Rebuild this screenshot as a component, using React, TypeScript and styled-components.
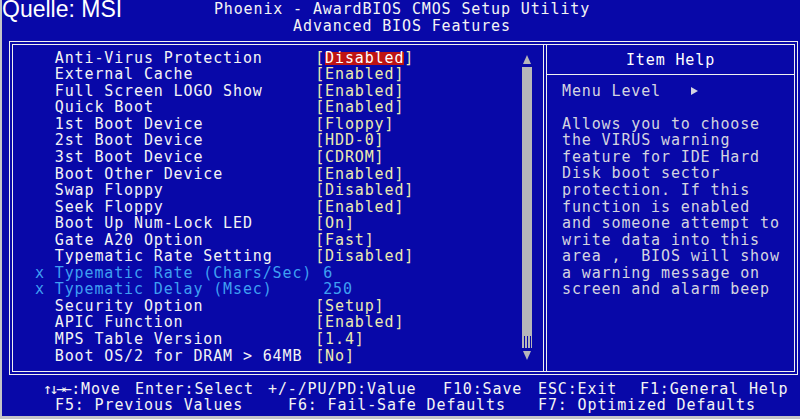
import React from "react";
import styled, { createGlobalStyle } from "styled-components";

const GlobalStyle = createGlobalStyle`
  html, body { margin: 0; padding: 0; background: #0808a8; }
  * { box-sizing: border-box; }
`;

const MONO = `"DejaVu Sans Mono", "Liberation Mono", monospace`;
const BLUE = "#0808a8";
const LINE = 16.55;

const Screen = styled.div`
  width: 800px;
  height: 419px;
  background: ${BLUE};
  border-left: 2px solid #c4c4c8;
  border-bottom: 3px solid #c4c4c8;
  display: flex;
  flex-direction: column;
  font-family: ${MONO};
  font-size: 15px;
  letter-spacing: 0.87px;
  line-height: ${LINE}px;
  color: #f4f4f4;
  overflow: hidden;
`;

const Header = styled.header`
  position: relative;
  height: 41px;
  padding-top: 1px;
  display: flex;
  flex-direction: column;
  align-items: center;
  white-space: pre;
`;

const Watermark = styled.div`
  position: absolute;
  left: 0;
  top: 0;
  font-family: "Liberation Sans", Arial, sans-serif;
  font-size: 23px;
  line-height: 19px;
  letter-spacing: 0;
  color: #ffffff;
`;

const TitleLine = styled.div<{ $shift?: number }>`
  height: ${LINE}px;
  margin-left: ${(p) => p.$shift ?? 0}px;
`;

const Frame = styled.div`
  height: 334px;
  margin: 0 0 0 7px;
  width: 789px;
  border: 4px double #f0f0f0;
  display: flex;
`;

const LeftPanel = styled.section`
  flex: 1;
  display: flex;
`;

const RowList = styled.div`
  flex: 1;
  padding: 4.7px 0 0 22px;
  display: flex;
  flex-direction: column;
`;

const Row = styled.div<{ $dim?: boolean }>`
  display: grid;
  grid-template-columns: 19.8px 260.4px 1fr;
  height: ${LINE}px;
  white-space: pre;
  color: ${(p) => (p.$dim ? "#3f9ff2" : "#f4f4f4")};
`;

const Value = styled.span<{ $dim?: boolean }>`
  color: ${(p) => (p.$dim ? "#3f9ff2" : "#ecebb0")};
  padding-left: ${(p) => (p.$dim ? 8 : 0)}px;
`;

const Selected = styled.span`
  display: inline-block;
  background: #be1414;
  color: #ffffff;
  line-height: 13px;
`;

const ScrollBar = styled.div`
  width: 10px;
  margin: 10px 11px 11px 0;
  display: flex;
  flex-direction: column;
  align-items: center;
`;

const Arrow = styled.svg`
  width: 10px;
  height: 9px;
  flex: none;
`;

const Track = styled.div`
  flex: 1;
  width: 10px;
  margin-top: 3px;
  background: #b6b6ba;
`;

const Dotted = styled.div`
  height: 12px;
  width: 10px;
  margin-bottom: 3px;
  background-image: repeating-linear-gradient(
      90deg,
      #b6b6ba 0 2px,
      ${BLUE} 2px 3px
    ),
    repeating-linear-gradient(0deg, ${BLUE} 0 1px, transparent 1px 2px);
`;

const RightPanel = styled.aside`
  width: 251px;
  border-left: 4px double #f0f0f0;
  display: flex;
  flex-direction: column;
`;

const HelpHeader = styled.div`
  height: 30px;
  border-bottom: 1px solid #f0f0f0;
  display: flex;
  align-items: center;
  justify-content: center;
  padding-top: 1px;
  color: #ffffff;
`;

const HelpBody = styled.div`
  padding: 7.7px 0 0 15px;
  color: #d4d4e0;
  white-space: pre;
`;

const HelpLine = styled.div`
  height: ${LINE}px;
  display: flex;
  align-items: center;
`;

const Pointer = styled.svg`
  width: 7px;
  height: 8px;
  margin-left: 30px;
  margin-top: 1px;
`;

const Footer = styled.footer`
  flex: 1;
  padding-top: 5.7px;
  display: flex;
  flex-direction: column;
  white-space: pre;
  color: #f4f4f4;
`;

const KeyLine = styled.div`
  height: ${LINE}px;
  display: grid;
  grid-template-columns: 92px 133px 175px 95px 102px auto;
  padding-left: 41px;
`;

const Arrows = styled.span`
  letter-spacing: -2.5px;
  margin-right: 2px;
`;

const KeyGrid = styled.div`
  height: ${LINE}px;
  display: grid;
  grid-template-columns: 233px 250px auto;
  padding-left: 53px;
`;

type Item = { label: string; value: string; dim?: boolean; selected?: boolean };

const items: Item[] = [
  { label: "Anti-Virus Protection", value: "Disabled", selected: true },
  { label: "External Cache", value: "Enabled" },
  { label: "Full Screen LOGO Show", value: "Enabled" },
  { label: "Quick Boot", value: "Enabled" },
  { label: "1st Boot Device", value: "Floppy" },
  { label: "2st Boot Device", value: "HDD-0" },
  { label: "3st Boot Device", value: "CDROM" },
  { label: "Boot Other Device", value: "Enabled" },
  { label: "Swap Floppy", value: "Disabled" },
  { label: "Seek Floppy", value: "Enabled" },
  { label: "Boot Up Num-Lock LED", value: "On" },
  { label: "Gate A20 Option", value: "Fast" },
  { label: "Typematic Rate Setting", value: "Disabled" },
  { label: "Typematic Rate (Chars/Sec)", value: "6", dim: true },
  { label: "Typematic Delay (Msec)", value: "250", dim: true },
  { label: "Security Option", value: "Setup" },
  { label: "APIC Function", value: "Enabled" },
  { label: "MPS Table Version", value: "1.4" },
  { label: "Boot OS/2 for DRAM > 64MB", value: "No" },
];

const helpLines = [
  "Allows you to choose",
  "the VIRUS warning",
  "feature for IDE Hard",
  "Disk boot sector",
  "protection. If this",
  "function is enabled",
  "and someone attempt to",
  "write data into this",
  "area ,  BIOS will show",
  "a warning message on",
  "screen and alarm beep",
];

export default function App() {
  return (
    <>
      <GlobalStyle />
      <Screen>
        <Header>
          <Watermark>Quelle: MSI</Watermark>
          <TitleLine $shift={2}>Phoenix - AwardBIOS CMOS Setup Utility</TitleLine>
          <TitleLine $shift={2}>Advanced BIOS Features</TitleLine>
        </Header>
        <Frame>
          <LeftPanel>
            <RowList>
              {items.map((it) => (
                <Row key={it.label} $dim={it.dim}>
                  <span>{it.dim ? "x" : ""}</span>
                  <span>{it.label}</span>
                  {it.dim ? (
                    <Value $dim>{it.value}</Value>
                  ) : (
                    <Value>
                      [{it.selected ? <Selected>{it.value}</Selected> : it.value}]
                    </Value>
                  )}
                </Row>
              ))}
            </RowList>
            <ScrollBar>
              <Arrow viewBox="0 0 10 9">
                <polygon points="5,0 9,9 1,9" fill="#b6b6ba" />
              </Arrow>
              <Track />
              <Dotted />
              <Arrow viewBox="0 0 10 9">
                <polygon points="1,0 9,0 5,9" fill="#b6b6ba" />
              </Arrow>
            </ScrollBar>
          </LeftPanel>
          <RightPanel>
            <HelpHeader>Item Help</HelpHeader>
            <HelpBody>
              <HelpLine>
                Menu Level
                <Pointer viewBox="0 0 7 8">
                  <polygon points="0,0 7,4 0,8" fill="#d4d4e0" />
                </Pointer>
              </HelpLine>
              <HelpLine />
              {helpLines.map((l) => (
                <HelpLine key={l}>{l}</HelpLine>
              ))}
            </HelpBody>
          </RightPanel>
        </Frame>
        <Footer>
          <KeyLine>
            <span>
              <Arrows>↑↓→←</Arrows>:Move
            </span>
            <span>Enter:Select</span>
            <span>+/-/PU/PD:Value</span>
            <span>F10:Save</span>
            <span>ESC:Exit</span>
            <span>F1:General Help</span>
          </KeyLine>
          <KeyGrid>
            <span>F5: Previous Values</span>
            <span>F6: Fail-Safe Defaults</span>
            <span>F7: Optimized Defaults</span>
          </KeyGrid>
        </Footer>
      </Screen>
    </>
  );
}
